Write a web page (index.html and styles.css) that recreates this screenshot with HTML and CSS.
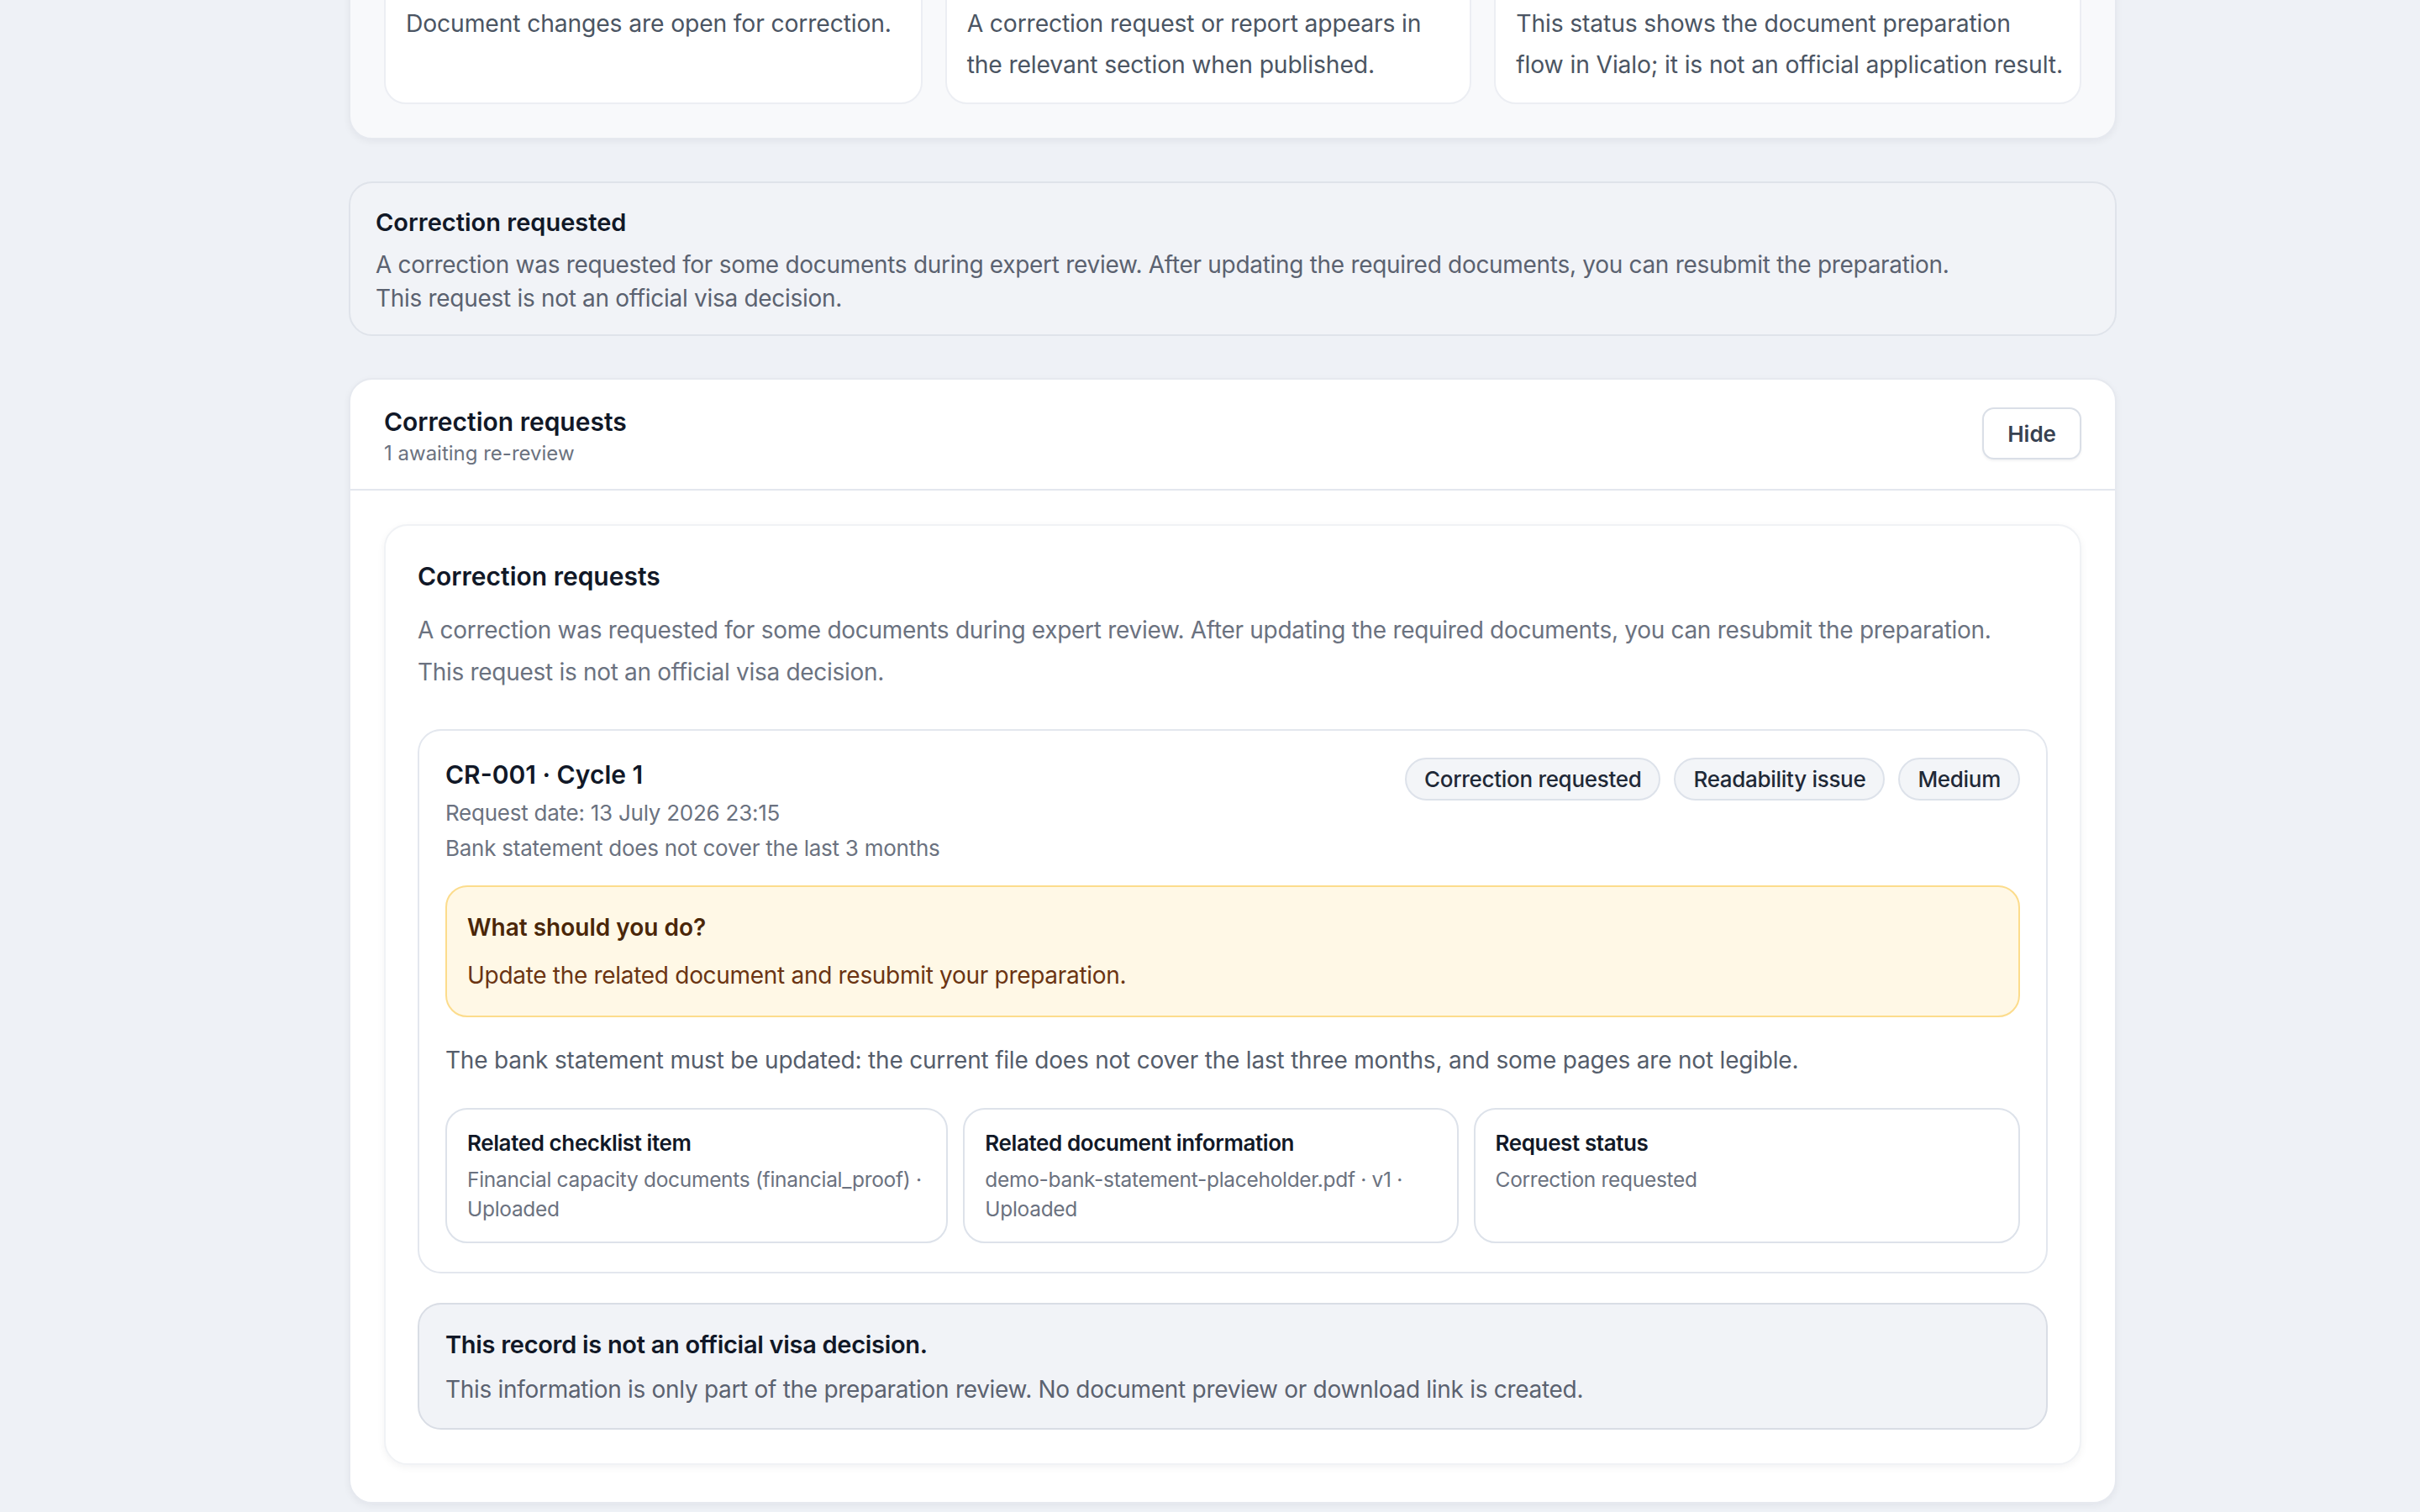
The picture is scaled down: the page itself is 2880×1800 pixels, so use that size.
FILE: index.html
```html
<!DOCTYPE html>
<html lang="en">
<head>
    <meta charset="UTF-8">
    <meta name="viewport" content="width=device-width, initial-scale=1.0">
    <title>Vialo - Correction requests</title>
    <link rel="stylesheet" href="styles.css">
</head>
<body>
    <main class="page">
        <section class="panel status-panel">
            <div class="status-grid">
                <div class="status-card">
                    <p>Document changes are open for correction.</p>
                </div>
                <div class="status-card">
                    <p>A correction request or report appears in the relevant section when published.</p>
                </div>
                <div class="status-card">
                    <p>This status shows the document preparation flow in Vialo; it is not an official application result.</p>
                </div>
            </div>
        </section>

        <section class="notice">
            <h3 class="notice-title">Correction requested</h3>
            <p class="notice-text">A correction was requested for some documents during expert review. After updating the required documents, you can resubmit the preparation.<br>This request is not an official visa decision.</p>
        </section>

        <section class="panel section-card">
            <header class="section-head">
                <div>
                    <h2 class="section-title">Correction requests</h2>
                    <div class="section-sub">1 awaiting re-review</div>
                </div>
                <button class="btn-hide">Hide</button>
            </header>

            <div class="section-body">
                <div class="inner-panel">
                    <h3 class="inner-title">Correction requests</h3>
                    <p class="inner-desc">A correction was requested for some documents during expert review. After updating the required documents, you can resubmit the preparation.<br>This request is not an official visa decision.</p>

                    <article class="request">
                        <div class="request-top">
                            <div>
                                <div class="request-id">CR-001 · Cycle 1</div>
                                <div class="request-date">Request date: 13 July 2026 23:15</div>
                                <div class="request-reason">Bank statement does not cover the last 3 months</div>
                            </div>
                            <div class="badges">
                                <span class="badge">Correction requested</span>
                                <span class="badge">Readability issue</span>
                                <span class="badge">Medium</span>
                            </div>
                        </div>

                        <div class="todo">
                            <div class="todo-title">What should you do?</div>
                            <div class="todo-text">Update the related document and resubmit your preparation.</div>
                        </div>

                        <p class="request-note">The bank statement must be updated: the current file does not cover the last three months, and some pages are not legible.</p>

                        <div class="info-grid">
                            <div class="info-box">
                                <div class="info-label">Related checklist item</div>
                                <div class="info-value">Financial capacity documents (financial_proof) · Uploaded</div>
                            </div>
                            <div class="info-box">
                                <div class="info-label">Related document information</div>
                                <div class="info-value">demo-bank-statement-placeholder.pdf · v1 · Uploaded</div>
                            </div>
                            <div class="info-box">
                                <div class="info-label">Request status</div>
                                <div class="info-value">Correction requested</div>
                            </div>
                        </div>
                    </article>

                    <div class="disclaimer">
                        <div class="disclaimer-title">This record is not an official visa decision.</div>
                        <div class="disclaimer-text">This information is only part of the preparation review. No document preview or download link is created.</div>
                    </div>
                </div>
            </div>
        </section>
    </main>
</body>
</html>
```

FILE: styles.css
```css
* {
    box-sizing: border-box;
}

html, body {
    height: 100%;
}

body {
    margin: 0;
    background-color: #eef1f6;
    color: #111827;
    font-family: 'Inter', 'Noto Sans', sans-serif;
    overflow: hidden;
}

h2, h3, p {
    margin: 0;
}

.page {
    width: 2104px;
    margin: -66px 0 0 415px;
    display: flex;
    flex-direction: column;
    gap: 50px;
}

.panel {
    background: #ffffff;
    border: 2px solid #e6e9ef;
    border-radius: 28px;
    box-shadow: 0 3px 8px rgba(15, 23, 42, 0.05);
}

/* status cards at the top (scrolled partly out of view) */
.status-panel {
    padding: 40px;
    background: #f8f9fb;
}

.status-grid {
    display: grid;
    grid-template-columns: 640fr 626fr 698fr;
    gap: 27px;
}

.status-card {
    background: #ffffff;
    border: 2px solid #eceef3;
    border-radius: 26px;
    padding: 26px 20px 20px 24px;
    font-size: 28.3px;
    line-height: 49px;
    letter-spacing: -0.15px;
    color: #4b5563;
}

/* notice banner */
.notice {
    background: #f1f3f7;
    border: 2px solid #dfe3ea;
    border-radius: 28px;
    padding: 27px 30px 23px;
}

.notice-title {
    font-size: 29px;
    line-height: 40px;
    font-weight: 600;
    color: #111827;
}

.notice-text {
    margin-top: 10px;
    font-size: 28px;
    line-height: 40px;
    letter-spacing: -0.3px;
    color: #5b6270;
}

/* correction requests section */
.section-head {
    display: flex;
    justify-content: space-between;
    align-items: center;
    padding: 30px 40px 26px;
    border-bottom: 2px solid #e3e7ee;
}

.section-title {
    font-size: 30px;
    line-height: 40px;
    font-weight: 600;
    color: #111827;
}

.section-sub {
    margin-top: 2px;
    font-size: 24px;
    line-height: 32px;
    color: #6b7280;
}

.btn-hide {
    height: 62px;
    margin-bottom: 6px;
    padding: 0 28px;
    background: #ffffff;
    border: 2px solid #dadfe7;
    border-radius: 14px;
    font-family: inherit;
    font-size: 26px;
    font-weight: 600;
    color: #374151;
    box-shadow: 0 2px 3px rgba(15, 23, 42, 0.05);
    cursor: pointer;
}

.section-body {
    padding: 40px 40px 44px;
}

.inner-panel {
    background: #ffffff;
    border: 2px solid #f0f2f5;
    border-radius: 28px;
    padding: 40px 38px 40px;
    box-shadow: 0 3px 10px rgba(15, 23, 42, 0.05);
}

.inner-title {
    font-size: 30px;
    line-height: 40px;
    font-weight: 600;
    color: #111827;
}

.inner-desc {
    margin-top: 19px;
    font-size: 28px;
    line-height: 50px;
    letter-spacing: -0.3px;
    color: #6b7280;
}

/* request card */
.request {
    margin-top: 43px;
    border: 2px solid #e3e7ee;
    border-radius: 28px;
    padding: 32px 31px 34px;
}

.request-top {
    display: flex;
    justify-content: space-between;
    align-items: flex-start;
}

.request-id {
    font-size: 30px;
    line-height: 40px;
    font-weight: 600;
    color: #111827;
}

.request-date {
    margin-top: 6px;
    font-size: 26px;
    line-height: 40px;
    letter-spacing: -0.25px;
    color: #6b7280;
}

.request-reason {
    margin-top: 2px;
    font-size: 26px;
    line-height: 40px;
    letter-spacing: -0.25px;
    color: #6b7280;
}

.badges {
    display: flex;
    gap: 16px;
}

.badge {
    display: inline-flex;
    align-items: center;
    height: 51px;
    padding: 0 21px;
    background: #f3f5f8;
    border: 2px solid #dde2ea;
    border-radius: 999px;
    font-size: 26px;
    font-weight: 500;
    letter-spacing: -0.3px;
    color: #1f2937;
}

.todo {
    margin-top: 24px;
    background: #fff8e6;
    border: 2px solid #fcdc8c;
    border-radius: 26px;
    padding: 28px 24px;
}

.todo-title {
    font-size: 28px;
    line-height: 40px;
    font-weight: 600;
    color: #4a2608;
}

.todo-text {
    margin-top: 17px;
    font-size: 28px;
    line-height: 40px;
    letter-spacing: -0.3px;
    color: #6b3412;
}

.request-note {
    margin-top: 26px;
    font-size: 28px;
    line-height: 50px;
    letter-spacing: -0.2px;
    color: #555d6b;
}

.info-grid {
    margin-top: 32px;
    display: grid;
    grid-template-columns: 597fr 588fr 649fr;
    gap: 18px;
}

.info-box {
    border: 2px solid #dde2ea;
    border-radius: 26px;
    padding: 22px 20px 21px 24px;
}

.info-label {
    font-size: 26px;
    line-height: 36px;
    font-weight: 600;
    letter-spacing: -0.4px;
    color: #111827;
}

.info-value {
    margin-top: 8px;
    font-size: 24.5px;
    line-height: 35px;
    letter-spacing: -0.3px;
    color: #6b7280;
}

/* disclaimer */
.disclaimer {
    margin-top: 35px;
    background: #f1f3f7;
    border: 2px solid #d9dde5;
    border-radius: 28px;
    padding: 28px 31px 26px;
}

.disclaimer-title {
    font-size: 29px;
    line-height: 40px;
    font-weight: 600;
    letter-spacing: -0.3px;
    color: #111827;
}

.disclaimer-text {
    margin-top: 13px;
    font-size: 28px;
    line-height: 40px;
    letter-spacing: -0.3px;
    color: #5b6270;
}
```
